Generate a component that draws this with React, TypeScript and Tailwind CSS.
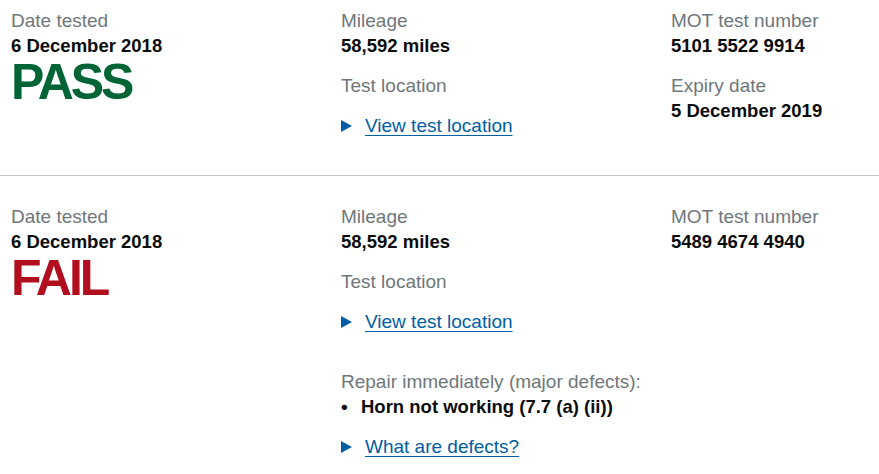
import React from "react"

const font = { fontFamily: '"Liberation Sans", Arial, sans-serif' }

const Label = ({ children }: { children: React.ReactNode }) => (
    <p className="text-[19px] leading-[25px] text-[#6f777b]">{children}</p>
)

const Value = ({ children }: { children: React.ReactNode }) => (
    <p className="text-[18.5px] leading-[25px] font-bold text-[#0b0c0c]">{children}</p>
)

const DetailsLink = ({ text }: { text: string }) => (
    <div className="flex items-center mt-[15px] text-[19px] leading-[25px] text-[#005ea5]">
        <svg width="11" height="12" viewBox="0 0 11 12" className="mr-[13px]">
            <polygon points="0,0 11,6 0,12" fill="#005ea5" />
        </svg>
        <span className="underline underline-offset-[3px] decoration-1">{text}</span>
    </div>
)

interface ResultProps {
    status: "PASS" | "FAIL"
    number: string
    expiry?: string
    defect?: string
}

const TestResult: React.FC<ResultProps> = ({ status, number, expiry, defect }) => {
    return (
        <div className="grid grid-cols-[330px_330px_1fr] pl-[11px]">
            <div>
                <Label>Date tested</Label>
                <Value>6 December 2018</Value>
                <p
                    className={
                        "text-[50px] leading-[50px] font-bold tracking-[-3px] mt-[-1px] " +
                        (status === "PASS" ? "text-[#006435]" : "text-[#b10e1e]")
                    }
                >
                    {status}
                </p>
            </div>
            <div>
                <Label>Mileage</Label>
                <Value>58,592 miles</Value>
                <div className="mt-[15px]">
                    <Label>Test location</Label>
                </div>
                <DetailsLink text="View test location" />
                {defect && (
                    <div className="mt-[35px]">
                        <Label>Repair immediately (major defects):</Label>
                        <ul>
                            <li className="flex items-center">
                                <span className="w-[20px] text-[19px] leading-[25px] font-bold">•</span>
                                <Value>{defect}</Value>
                            </li>
                        </ul>
                        <DetailsLink text="What are defects?" />
                    </div>
                )}
            </div>
            <div>
                <Label>MOT test number</Label>
                <Value>{number}</Value>
                {expiry && (
                    <div className="mt-[15px]">
                        <Label>Expiry date</Label>
                        <Value>{expiry}</Value>
                    </div>
                )}
            </div>
        </div>
    )
}

export default function App() {
    return (
        <div className="bg-white w-[879px] h-[474px] overflow-hidden" style={font}>
            <div className="pt-[8px] pb-[37px] border-b border-[#bfc1c3]">
                <TestResult status="PASS" number="5101 5522 9914" expiry="5 December 2019" />
            </div>
            <div className="pt-[28px]">
                <TestResult status="FAIL" number="5489 4674 4940" defect="Horn not working (7.7 (a) (ii))" />
            </div>
        </div>
    )
}
